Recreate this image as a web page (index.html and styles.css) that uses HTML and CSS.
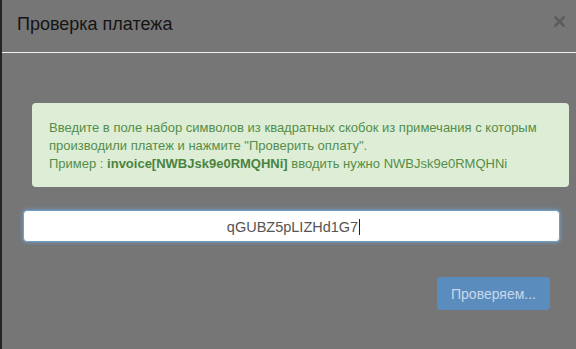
FILE: index.html
```html
<!DOCTYPE html>
<html lang="ru">
<head>
<meta charset="utf-8">
<title>Проверка платежа</title>
<link rel="stylesheet" href="styles.css">
</head>
<body>
<div class="modal">
  <div class="modal-header">
    <h4 class="modal-title">Проверка платежа</h4>
    <span class="close">
      <svg width="11" height="11" viewBox="0 0 11 11"><path d="M1.5 1.5 L9.5 9.5 M9.5 1.5 L1.5 9.5" stroke="#5c5c5c" stroke-width="2.6" stroke-linecap="square"/></svg>
    </span>
  </div>
  <div class="modal-body">
    <div class="alert">
      Введите в поле набор символов из квадратных скобок из примечания с которым производили платеж и нажмите "Проверить оплату".<br>
      Пример : <b>invoice[NWBJsk9e0RMQHNi]</b> вводить нужно NWBJsk9e0RMQHNi
    </div>
    <div class="field"><span class="field-text">qGUBZ5pLIZHd1G7</span><span class="caret"></span></div>
    <div class="actions">
      <button class="btn">Проверяем...</button>
    </div>
  </div>
</div>
</body>
</html>
```

FILE: styles.css
```css
html, body {
  margin: 0;
  padding: 0;
  height: 100%;
  background: #767676;
  font-family: "Liberation Sans", Arial, sans-serif;
}
.modal {
  height: 349px;
  border-left: 2px solid #242424;
  box-sizing: border-box;
}
.modal-header {
  display: flex;
  align-items: flex-start;
  height: 53px;
  box-sizing: border-box;
  padding: 13px 0 0 15px;
  border-bottom: 1px solid #f2f2f2;
}
.modal-title {
  margin: 0;
  font-size: 18px;
  line-height: 22px;
  font-weight: normal;
  color: #141414;
}
.close {
  margin-left: auto;
  margin-right: 11px;
  margin-top: 3px;
  display: flex;
}
.modal-body {
  padding: 50px 0 0 21px;
}
.alert {
  margin-left: 9px;
  width: 537px;
  box-sizing: border-box;
  padding: 16px 10px 14px 17px;
  background: #deedd6;
  border-radius: 4px;
  color: #548d49;
  font-size: 13px;
  line-height: 18px;
}
.alert b {
  color: #4a8340;
}
.field {
  margin-top: 23px;
  width: 537px;
  height: 32px;
  box-sizing: border-box;
  background: #fff;
  border: 1px solid #6f9fc7;
  border-radius: 4px;
  box-shadow: 0 0 4px rgba(110, 170, 225, 0.8);
  display: flex;
  align-items: center;
  justify-content: center;
  font-size: 14.5px;
  color: #555;
  padding-top: 1px;
  padding-left: 4px;
}
.caret {
  display: inline-block;
  width: 1px;
  height: 16px;
  background: #222;
  margin-left: 1px;
}
.actions {
  display: flex;
  justify-content: flex-end;
  padding-right: 26px;
  margin-top: 35px;
}
.btn {
  width: 113px;
  height: 33px;
  border: none;
  border-radius: 4px;
  background: #5a8cbe;
  color: #c9d9ea;
  font-family: "Liberation Sans", Arial, sans-serif;
  font-size: 14px;
  padding: 0;
}
```
